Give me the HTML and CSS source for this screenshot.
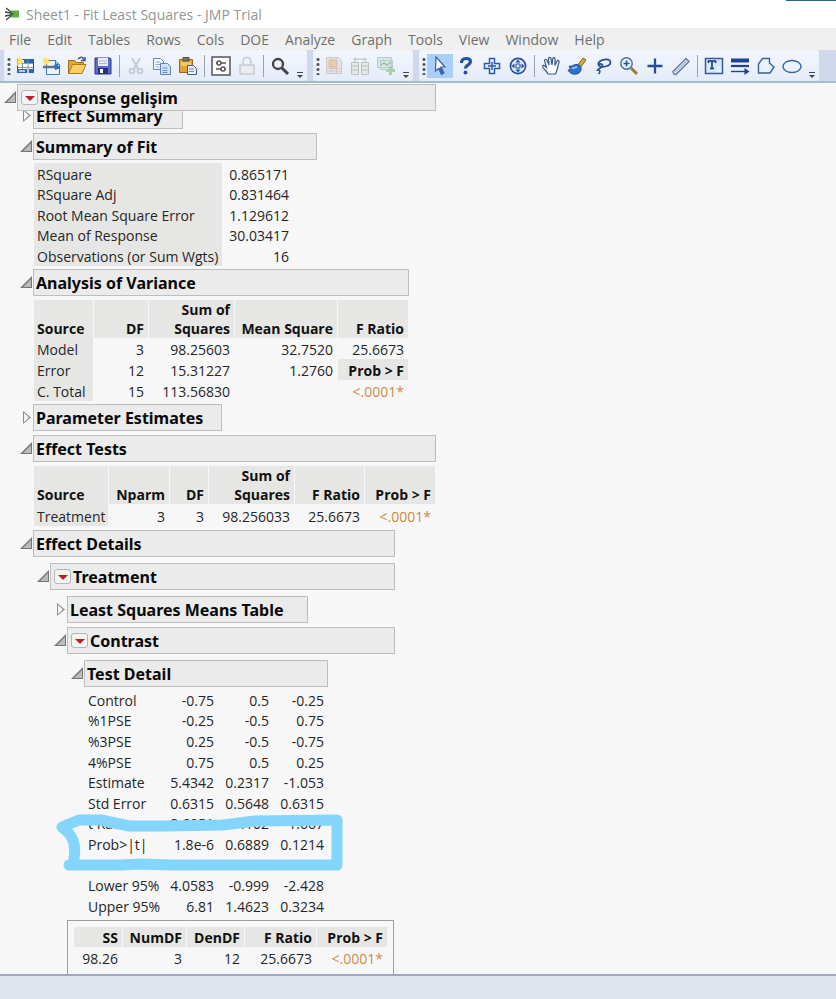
FILE: index.html
```html
<!DOCTYPE html>
<html lang="en">
<head>
<meta charset="utf-8">
<title>Sheet1 - Fit Least Squares - JMP Trial</title>
<link rel="stylesheet" href="styles.css">
</head>
<body>
<div class="app">
  <header class="titlebar">
    <svg class="logo" width="16" height="14" viewBox="0 0 16 14"><path d="M1 1l5 4M0 5l6 1M0 9l6-1M1 13l5-4" stroke="#444" stroke-width="1.3" fill="none"/><path d="M6 3.500h8v7H6z" fill="#5fae45"/><path d="M5 4l4 3-4 3" fill="#3d6a35"/></svg>
    <h1>Sheet1 - Fit Least Squares - JMP Trial</h1>
    <span class="edge"></span>
  </header>
  <nav class="menu">
    <a href="#">File</a><a href="#">Edit</a><a href="#">Tables</a><a href="#">Rows</a><a href="#">Cols</a><a href="#">DOE</a><a href="#">Analyze</a><a href="#">Graph</a><a href="#">Tools</a><a href="#">View</a><a href="#">Window</a><a href="#">Help</a>
  </nav>
  <div class="toolbar">
    <div class="group">
      <span class="grip"></span>
      <button aria-label="New table"><svg viewBox="0 0 20 20"><path d="M2.500 3.500h16v12h-16z" fill="#fff" stroke="#234f8c"/><path d="M9 3h10v4H9z" fill="#2e62a8"/><path d="M3 7.500h15M3 11.500h15M7.500 7v8M13 4v11" stroke="#6fa0d2"/><path d="M2 13h17v4H2z" fill="#2e68b0"/><path d="M4 15h6M13 13v4" stroke="#d8ecfa" stroke-width="1.500"/><path d="M4.500 0l1 3 3-1-1.500 3 3 1.500-3.500.5.5 3.500-2-2.500L2 10l.5-3.500L0 5l3-.5L1.500 1.500l2.500 1z" fill="#ffe45b"/></svg></button>
      <button aria-label="New script"><svg viewBox="0 0 20 20"><path d="M5.500 4.500h9l4 4v10h-13z" fill="#eaf4ff" stroke="#4776ad"/><path d="M14.500 4.500v4h4" fill="#bdd7ef" stroke="#4776ad"/><path d="M2 11h12" stroke="#5d7184" stroke-width="2.500"/><path d="M13 9l4-2v3h2v3h-2l-3 1z" fill="#2f74b8"/><path d="M5 0l1 3 3-1-1.500 3 2.500 1.500-3 .5.5 3-2.500-2L3 9.500 3 6.500 0 5l3-.5L2 1.500l2.500 1z" fill="#ffe06a"/></svg></button>
      <button aria-label="Open"><svg viewBox="0 0 20 20"><path d="M1.500 17.500v-13h6l2 2h7v3" fill="#e5a739" stroke="#9b6b18"/><path d="M1.500 17.500l4-9h13.500l-4 9z" fill="#ffcf62" stroke="#a97820"/><path d="M11 3c3-3 5-2 6 1m1-3v3.500h-4" fill="none" stroke="#4a5b7c" stroke-width="1.500"/></svg></button>
      <button aria-label="Save"><svg viewBox="0 0 20 20"><path d="M2 2h15l1 1v15H2z" fill="#5d6ccb" stroke="#2d3787"/><path d="M5 2h10v8H5z" fill="#e8eaff"/><path d="M5 12h10v6H5z" fill="#24307c"/><path d="M7 13h3v4H7z" fill="#fff"/><path d="M6 5h8M6 7.500h8" stroke="#aeb5df"/></svg></button>
      <span class="sep"></span>
      <button aria-label="Cut"><svg viewBox="0 0 20 20" fill="none" stroke="#c3cad5" stroke-width="1.800"><path d="M6 2l6 11M14 2L8 13"/><circle cx="6" cy="15" r="2.400"/><circle cx="14" cy="15" r="2.400"/></svg></button>
      <button aria-label="Copy"><svg viewBox="0 0 20 20" stroke="#6284b5"><path d="M1.500 2.500h7l3 3v8h-10z" fill="#f4f9ff"/><path d="M3.500 6h5M3.500 8.500h5M3.500 11h4" stroke="#8ba9cf"/><path d="M8.500 7.500h7l3 3v8h-10z" fill="#cfe2fb"/><path d="M10.500 12h5M10.500 14.500h5M10.500 16.500h5" stroke="#6b91c4"/></svg></button>
      <button aria-label="Paste"><svg viewBox="0 0 20 20"><path d="M1.500 3.500h13v13h-13z" fill="#dda635" stroke="#9a671c"/><path d="M5 1.500h6v3.500H5z" fill="#777" stroke="#574a38"/><path d="M3 6h10v4H3z" fill="#f2c75f"/><path d="M9.500 9.500h6l3 3v6h-9z" fill="#e8f0fa" stroke="#4c5b76"/><path d="M11 13h5M11 15.500h5" stroke="#738cb0"/></svg></button>
      <span class="sep"></span>
      <button aria-label="Preferences"><svg viewBox="0 0 20 20" fill="none" stroke="#555" stroke-width="1.500"><path d="M1 1h18v18H1z" fill="#fafafa"/><path d="M5 7h10M5 13h10"/><circle cx="8" cy="7" r="2" fill="#fff"/><circle cx="12" cy="13" r="2" fill="#fff"/></svg></button>
      <button aria-label="Lock"><svg viewBox="0 0 20 20" fill="none" stroke="#c8ccd2" stroke-width="1.500"><path d="M3 9h14v9H3z" fill="#e9edf3"/><path d="M6 9V6c0-6 8-6 8 0v3"/></svg></button>
      <span class="sep"></span>
      <button aria-label="Search"><svg viewBox="0 0 20 20" fill="none" stroke="#424242"><circle cx="8" cy="8" r="5" stroke-width="2.300"/><path d="M12 12l6 6" stroke-width="3"/></svg></button>
      <button class="more" aria-label="More"></button>
    </div>
    <div class="group">
      <span class="grip"></span>
      <button aria-label="Data table" disabled><svg viewBox="0 0 20 20" stroke="#c9c9cc"><path d="M2.500 1.500h12l3 3v13h-15z" fill="#e5e5e7"/><path d="M5 4h8v7H5z" fill="#f0cda9" stroke="#e5b78e"/><path d="M3 12.500h14M3 15h14M7.500 2v15M12.500 2v15" stroke="#d6c5c1"/></svg></button>
      <button aria-label="Join" disabled><svg viewBox="0 0 20 20" fill="#e4e8e6" stroke="#b9c2bf"><path d="M1.500 6.500h7v12h-7zM11.500 6.500h7v12h-7zM2 10h6M2 14h6M12 10h6M12 14h6"/><path d="M5 6V3h10v3M3 4l2-2 2 2M13 4l2-2 2 2" fill="none"/></svg></button>
      <button aria-label="Add graph" disabled><svg viewBox="0 0 20 20"><path d="M1.500 1.500h14v10h-14zM4.500 4.500h12v9h-12z" fill="#d8e8ea" stroke="#b8c9cf"/><path d="M5 9l3-2 3 2 4-3" stroke="#8fc39d" fill="none" stroke-width="1.500"/><path d="M13 10h3v3h3v3h-3v3h-3v-3h-3v-3h3z" fill="#abcfa9"/></svg></button>
      <button class="more" aria-label="More"></button>
    </div>
    <div class="group">
      <span class="grip"></span>
      <button class="on" aria-label="Arrow"><svg viewBox="0 0 20 20"><path d="M6 1l9 10H11l3 6-2.500 1.500-3-6L5.500 15z" fill="#fff" stroke="#3c62a5" stroke-width="1.200"/><path d="M11 11l3 6-2.500 1.500-3-6z" fill="#3d66ac"/></svg></button>
      <button aria-label="Help"><svg viewBox="0 0 20 20" fill="none"><path d="M5.500 7c0-6 9-5.500 9-1.500 0 4-5 3-5 7" stroke="#2450a0" stroke-width="3.200"/><circle cx="9.500" cy="16.500" r="2" fill="#2450a0"/></svg></button>
      <button aria-label="Selection"><svg viewBox="0 0 20 20"><path d="M7.500 2.500h5v5h5v5h-5v5h-5v-5h-5v-5h5z" fill="#e8f2ff" stroke="#2d5aa7" stroke-width="1.500"/><path d="M10 6v8M6 10h8" stroke="#2d5aa7" stroke-width="1.500"/></svg></button>
      <button aria-label="Scroller"><svg viewBox="0 0 20 20"><circle cx="10" cy="10" r="7.600" fill="#dbe9ff" stroke="#284f9b" stroke-width="1.600"/><path d="M10 3.500l2.500 3h-5zM10 16.500l2.500-3h-5zM3.500 10l3-2.500v5zM16.500 10l-3-2.500v5z" fill="#284f9b"/><path d="M8 8h4v4H8z" fill="none" stroke="#284f9b"/></svg></button>
      <span class="sep"></span>
      <button aria-label="Hand"><svg viewBox="0 0 20 20"><path d="M7 18c-1-3-5-5-5.500-8 1-1.500 2.500 0 4 1.500L3.500 4.500c.5-1.800 2-1.500 2.500 0L8 9 7.500 2.500c.5-1.700 2.300-1.500 2.500 0L11 9l.8-6.500c.7-1.500 2.200-1 2.200.5L14 9.500l2-4.500c1-1.300 2.500-.5 2 1l-2 8-1.500 4z" fill="#fff" stroke="#34588f" stroke-width="1.200"/></svg></button>
      <button aria-label="Brush"><svg viewBox="0 0 20 20"><path d="M10 10l6-8 3 2-6 8z" fill="#d8a543" stroke="#866126"/><path d="M2 10c4 1 5-3 10-1 4 2 2 9-3 9-4 1-7-2-8-4 2 0 3-1 1-4z" fill="#2c73ce" stroke="#204f99"/><path d="M5 12c2 1 3-1 5-1" stroke="#a9d3ff" stroke-width="1.500" fill="none"/></svg></button>
      <button aria-label="Lasso"><svg viewBox="0 0 20 20" fill="none" stroke="#294f94" stroke-width="1.700"><path d="M6 10C2 4 17 1 17.500 6c.5 4-8 6-11 4-2-2 2-3 3-1 1 3-3 2-5 5 3 0 3 2 1 4"/></svg></button>
      <button aria-label="Magnifier"><svg viewBox="0 0 20 20"><path d="M12 12l6 6" stroke="#a27a2d" stroke-width="3"/><circle cx="7.500" cy="7.500" r="5.700" fill="#e7f3ff" stroke="#496a9b" stroke-width="1.400"/><path d="M7.500 4.500v6M4.500 7.500h6" stroke="#294f94" stroke-width="1.500"/></svg></button>
      <button aria-label="Crosshairs"><svg viewBox="0 0 20 20"><path d="M10 2.500v15M2.500 10h15" stroke="#254d98" stroke-width="2.300"/></svg></button>
      <button aria-label="Ruler"><svg viewBox="0 0 20 20"><path d="M2 15.500L15 2.500l3 3-13 13c-2 0-3-1-3-3z" fill="#e4eaf6" stroke="#61769d" stroke-width="1.300"/><path d="M4.500 16L16 4.500" stroke="#8799ba"/></svg></button>
      <span class="sep"></span>
      <button aria-label="Annotate"><svg viewBox="0 0 20 20"><path d="M1.500 2.500h17v15h-17z" fill="#d7e7fc" stroke="#365c9b" stroke-width="1.500"/><path d="M4.500 7V5h7v2M8 5v7.500M6 12.500h4" stroke="#193a78" stroke-width="1.600" fill="none"/><path d="M13 15h4M13 12h4" stroke="#fff"/></svg></button>
      <button aria-label="Line"><svg viewBox="0 0 20 20"><path d="M1 4.500h18" stroke="#1f438c" stroke-width="4"/><path d="M1 10h18" stroke="#1f438c" stroke-width="2.200"/><path d="M1 15.500h15" stroke="#1f438c" stroke-width="1.400"/><path d="M14.500 12l5 3.500-5 3.500z" fill="#1f438c"/></svg></button>
      <button aria-label="Polygon"><svg viewBox="0 0 20 20"><path d="M2.500 17V8l4-5.500h7V7l4.500 4-4 6z" fill="#eaf3ff" stroke="#395f9e" stroke-width="1.400"/></svg></button>
      <button aria-label="Oval"><svg viewBox="0 0 20 20"><ellipse cx="10" cy="10.500" rx="9" ry="6" fill="#eaf3ff" stroke="#395f9e" stroke-width="1.400"/></svg></button>
      <button class="more" aria-label="More"></button>
    </div>
  </div>

  <main class="report">
    <section class="node top">
      <h2 class="bar"><button class="tri open" aria-label="Collapse"></button><button class="hot" aria-label="Response menu"></button>Response gelişim</h2>
      <section class="node w-effsum tucked">
        <h2 class="bar"><button class="tri" aria-label="Expand"></button>Effect Summary</h2>
      </section>
      <section class="node w-fit">
        <h2 class="bar"><button class="tri open" aria-label="Collapse"></button>Summary of Fit</h2>
        <table class="fit">
          <tr><th>RSquare</th><td>0.865171</td></tr>
          <tr><th>RSquare Adj</th><td>0.831464</td></tr>
          <tr><th>Root Mean Square Error</th><td>1.129612</td></tr>
          <tr><th>Mean of Response</th><td>30.03417</td></tr>
          <tr><th>Observations (or Sum Wgts)</th><td>16</td></tr>
        </table>
      </section>
      <section class="node w-anova">
        <h2 class="bar"><button class="tri open" aria-label="Collapse"></button>Analysis of Variance</h2>
        <table class="anova">
          <thead><tr><th>Source</th><th>DF</th><th>Sum of<br>Squares</th><th>Mean Square</th><th>F Ratio</th></tr></thead>
          <tbody>
          <tr><th>Model</th><td>3</td><td>98.25603</td><td>32.7520</td><td>25.6673</td></tr>
          <tr><th>Error</th><td>12</td><td>15.31227</td><td>1.2760</td><td class="sub">Prob &gt; F</td></tr>
          <tr><th>C. Total</th><td>15</td><td>113.56830</td><td></td><td class="sig">&lt;.0001*</td></tr>
          </tbody>
        </table>
      </section>
      <section class="node w-param">
        <h2 class="bar"><button class="tri" aria-label="Expand"></button>Parameter Estimates</h2>
      </section>
      <section class="node w-tests">
        <h2 class="bar"><button class="tri open" aria-label="Collapse"></button>Effect Tests</h2>
        <table class="tests">
          <thead><tr><th>Source</th><th>Nparm</th><th>DF</th><th>Sum of<br>Squares</th><th>F Ratio</th><th>Prob &gt; F</th></tr></thead>
          <tbody><tr><th>Treatment</th><td>3</td><td>3</td><td>98.256033</td><td>25.6673</td><td class="sig">&lt;.0001*</td></tr></tbody>
        </table>
      </section>
      <section class="node w-details">
        <h2 class="bar"><button class="tri open" aria-label="Collapse"></button>Effect Details</h2>
        <section class="node first">
          <h2 class="bar"><button class="tri open" aria-label="Collapse"></button><button class="hot" aria-label="Treatment menu"></button>Treatment</h2>
          <section class="node first w-means">
            <h2 class="bar"><button class="tri" aria-label="Expand"></button>Least Squares Means Table</h2>
          </section>
          <section class="node">
            <h2 class="bar"><button class="tri open" aria-label="Collapse"></button><button class="hot" aria-label="Contrast menu"></button>Contrast</h2>
            <section class="node first w-detail">
              <h2 class="bar"><button class="tri open" aria-label="Collapse"></button>Test Detail</h2>
              <div class="marked">
                <table class="detail">
                  <tr><th>Control</th><td>-0.75</td><td>0.5</td><td>-0.25</td></tr>
                  <tr><th>%1PSE</th><td>-0.25</td><td>-0.5</td><td>0.75</td></tr>
                  <tr><th>%3PSE</th><td>0.25</td><td>-0.5</td><td>-0.75</td></tr>
                  <tr><th>4%PSE</th><td>0.75</td><td>0.5</td><td>0.25</td></tr>
                  <tr><th>Estimate</th><td>5.4342</td><td>0.2317</td><td>-1.053</td></tr>
                  <tr><th>Std Error</th><td>0.6315</td><td>0.5648</td><td>0.6315</td></tr>
                  <tr><th>t Ratio</th><td>8.6051</td><td>0.4102</td><td>-1.667</td></tr>
                  <tr><th>Prob&gt;|t|</th><td>1.8e-6</td><td>0.6889</td><td>0.1214</td></tr>
                  <tr><th></th><td></td><td></td><td></td></tr>
                  <tr><th>Lower 95%</th><td>4.0583</td><td>-0.999</td><td>-2.428</td></tr>
                  <tr><th>Upper 95%</th><td>6.81</td><td>1.4623</td><td>0.3234</td></tr>
                </table>
                <svg class="marker" width="290" height="62" viewBox="0 0 290 62" fill="none" stroke="#83d5fb" stroke-width="11" stroke-linecap="round" stroke-linejoin="round"><path d="M14 53H66L86 52 116 53H282V8L200 9 168 13 110 14H74L46 8H24L7 15C15 21 22 29 19 46"/></svg>
              </div>
            </section>
            <div class="joint">
              <table class="ftest">
                <thead><tr><th>SS</th><th>NumDF</th><th>DenDF</th><th>F Ratio</th><th>Prob &gt; F</th></tr></thead>
                <tbody><tr><td>98.26</td><td>3</td><td>12</td><td>25.6673</td><td class="sig">&lt;.0001*</td></tr></tbody>
              </table>
            </div>
          </section>
        </section>
      </section>
    </section>
  </main>
  <footer class="status"></footer>
</div>
</body>
</html>
```

FILE: styles.css
```css
* { box-sizing: border-box; }

body {
  margin: 0;
  font-family: "Open Sans", "Noto Sans", sans-serif;
  font-size: 14px;
  color: #262626;
  background: #f7f7f7;
}

button {
  margin: 0;
  padding: 0;
  border: 0;
  background: none;
}

.app {
  display: flex;
  flex-direction: column;
  height: 100vh;
}

/* Window chrome */
.titlebar {
  position: relative;
  display: flex;
  flex: none;
  align-items: center;
  gap: 5px;
  height: 28px;
  padding-left: 5px;
  background: #fff;
}
.titlebar h1 {
  margin: 0;
  font-size: 14px;
  font-weight: 400;
  color: #959595;
}
.edge {
  position: absolute;
  top: 0;
  right: 0;
  width: 50px;
  height: 1px;
  background: #2b6b78;
}

.menu {
  display: flex;
  flex: none;
  gap: 16px;
  height: 22px;
  padding-left: 9px;
  line-height: 23px;
  background: #f0f0f0;
}
.menu a {
  color: #6f6f6f;
  text-decoration: none;
}

.toolbar {
  display: flex;
  flex: none;
  gap: 6px;
  height: 33px;
  padding-left: 4px;
  background: #d0d8ec;
  border-bottom: 2px solid #a9b8cc;
}
.group {
  display: flex;
  align-items: center;
  background: linear-gradient(#f3f6fd, #e4ecf9);
  border-radius: 3px;
}
.group button {
  display: flex;
  align-items: center;
  justify-content: center;
  width: 26px;
  height: 24px;
}
.group svg {
  width: 20px;
  height: 20px;
}
.group .on { background: #a9cffb; }
.grip {
  width: 8px;
  height: 18px;
  background: radial-gradient(circle, #555 1px, transparent 2px) 3px 0 / 4px 5px repeat-y;
}
.sep {
  width: 1px;
  height: 22px;
  margin: 0 3px;
  background: #9aa3b3;
}
.group .more {
  position: relative;
  width: 14px;
}
.more::before,
.more::after {
  content: "";
  position: absolute;
}
.more::before {
  left: 4px;
  bottom: 5px;
  width: 6px;
  height: 1px;
  background: #444;
}
.more::after {
  left: 4px;
  bottom: 0;
  border: 3px solid transparent;
  border-top-color: #444;
  border-bottom: 0;
}

/* Report outline */
.report {
  flex: 1;
  min-height: 0;
  overflow: hidden;
  padding-top: 1px;
}
.node {
  margin-top: 4px;
  padding-left: 17px;
}
.node.top {
  width: 436px;
  margin-top: 0;
}
.node .node { padding-left: 17px; }
.node.top > .node { margin-left: -1px; }
.node .first { margin-top: 6px; }

.bar {
  position: relative;
  display: flex;
  align-items: center;
  height: 27px;
  margin: 0;
  padding-left: 2px;
  border: 1px solid #bdbebf;
  background: #ebebeb;
  font-family: "Noto Sans", "Open Sans", sans-serif;
  font-size: 16px;
  font-weight: 700;
  line-height: 20px;
  color: #080808;
  white-space: nowrap;
}
.top > .bar { z-index: 1; }
.node.top > .tucked { margin-top: -9px; }

.tri {
  position: absolute;
  left: -11px;
  top: 6px;
  width: 8px;
  height: 13px;
  background: #8e8e8e;
  clip-path: polygon(0 0, 100% 50%, 0 100%);
}
.tri::after {
  content: "";
  position: absolute;
  inset: 2px 2px 2px 1px;
  background: #f7f7f7;
  clip-path: polygon(0 0, 100% 50%, 0 100%);
}
.tri.open {
  left: -14px;
  width: 12px;
  height: 12px;
  background: #757575;
  clip-path: polygon(100% 0, 100% 100%, 0 100%);
}
.tri.open::after {
  inset: 3px 1px 1px 3px;
  background: #bbb;
  clip-path: polygon(100% 0, 100% 100%, 0 100%);
}
.hot {
  width: 17px;
  height: 15px;
  margin: 0 2px 0 1px;
  border: 1px solid #b5b5b5;
  border-radius: 3px;
  background: #f6f3f3;
}
.hot::after {
  content: "";
  display: block;
  width: 0;
  margin: 1px auto 0;
  border: 5px solid transparent;
  border-top-color: #b5202a;
  border-bottom: 0;
}

.w-effsum { width: 167px; }
.w-fit { width: 301px; }
.w-anova { width: 393px; }
.w-param { width: 206px; }
.w-tests { width: 420px; }
.w-details { width: 379px; }
.w-means { width: 258px; }
.w-detail { width: 261px; }

/* Tables */
table {
  table-layout: fixed;
  border-collapse: separate;
  border-spacing: 0;
  margin: 4px 0 0 1px;
  line-height: 19px;
}
th, td {
  height: 20px;
  padding: 0 4px 0 3px;
  border-right: 1px solid #f7f7f7;
  text-align: right;
  vertical-align: bottom;
  white-space: nowrap;
}
tr > th:first-child {
  text-align: left;
}
th {
  background: #e6e6e4;
  font-weight: 400;
}
thead th, .sub {
  background: #e6e6e4;
  font-weight: 700;
  color: #111;
}
.sig { color: #d18a45; }

.fit { width: 260px; height: 103px; margin-top: 3px; margin-bottom: -1px; }
.fit th { width: 189px; }

.anova { width: 375px; height: 101px; margin-bottom: -1px; }
.anova th:nth-child(1) { width: 60px; }
.anova th:nth-child(2) { width: 55px; }
.anova th:nth-child(3) { width: 86px; }
.anova th:nth-child(4) { width: 103px; }

.tests { width: 402px; height: 60px; }
.tests th:nth-child(1) { width: 75px; }
.tests th:nth-child(2) { width: 61px; }
.tests th:nth-child(3) { width: 39px; }
.tests th:nth-child(4) { width: 86px; }
.tests th:nth-child(5) { width: 70px; }

.marked { position: relative; }
.detail { width: 244px; height: 227px; margin-top: 2px; }
.detail th { width: 79px; background: none; }
.marker {
  position: absolute;
  left: -29px;
  top: 123px;
}

.joint {
  width: 327px;
  height: 80px;
  margin-top: 4px;
  padding: 6px;
  border: 1px solid #9c9ea6;
}
.ftest { width: 314px; height: 41px; margin: 0; }
.ftest th:first-child { width: 49px; text-align: right; }
.ftest th:nth-child(2) { width: 64px; }
.ftest th:nth-child(3) { width: 58px; }
.ftest th:nth-child(4) { width: 72px; }

.status {
  flex: none;
  height: 25px;
  border-top: 2px solid #9fa9bd;
  background: #dfe5ef;
}
```
